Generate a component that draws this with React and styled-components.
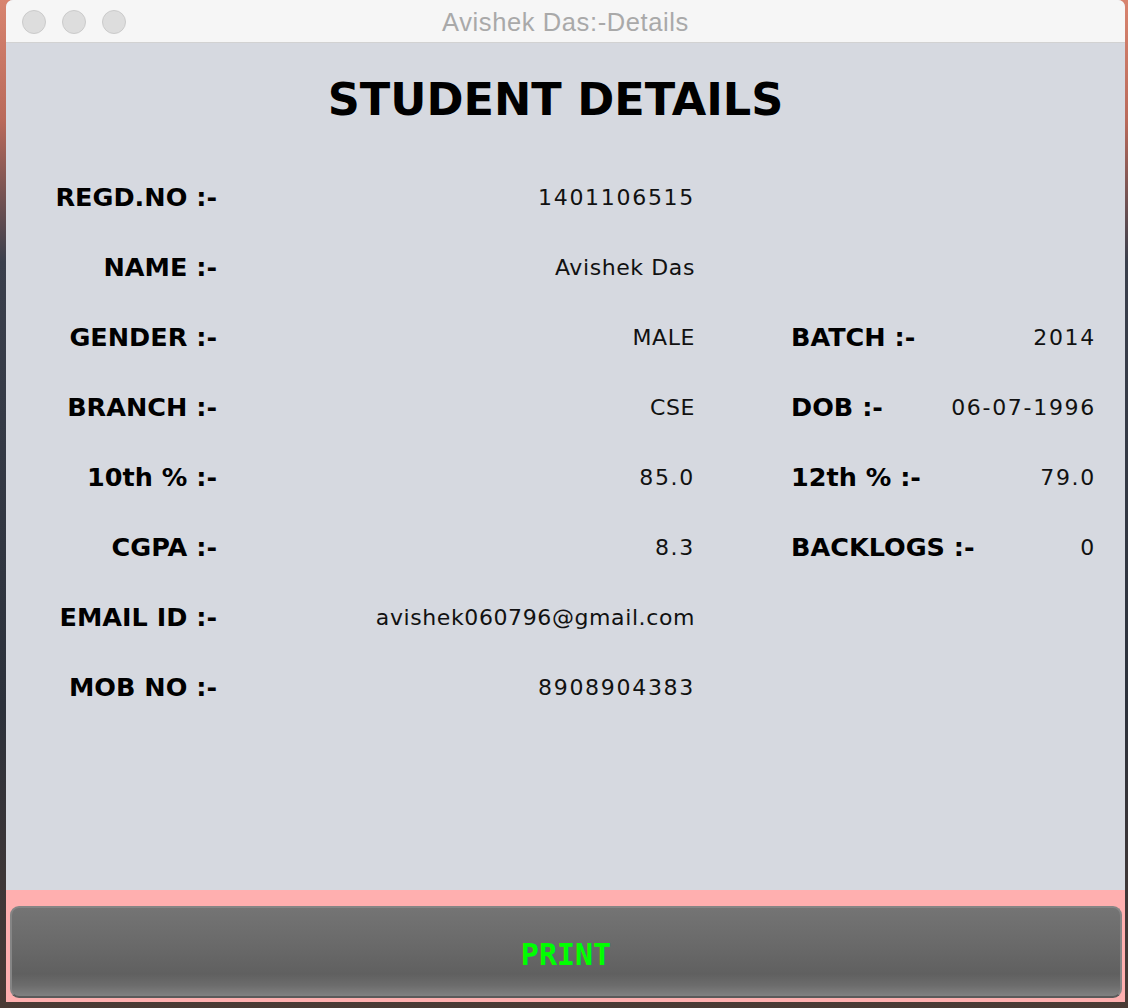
import styled, { createGlobalStyle } from 'styled-components'

const GlobalStyle = createGlobalStyle`
  html, body {
    margin: 0;
    padding: 0;
  }
  body {
    width: 1128px;
    height: 1008px;
    overflow: hidden;
    background: linear-gradient(180deg, #d8846f 0%, #b9695a 12%, #3a3f4c 26%, #2c313b 70%, #4a3a34 100%);
  }
`

const student = {
  regd: '1401106515',
  name: 'Avishek Das',
  gender: 'MALE',
  branch: 'CSE',
  tenth: '85.0',
  cgpa: '8.3',
  email: 'avishek060796@gmail.com',
  mob: '8908904383',
  batch: '2014',
  dob: '06-07-1996',
  twelfth: '79.0',
  backlogs: '0',
}

const isNumeric = (v) => /^[\d.\-]+$/.test(v)

function App() {
  const rows = [
    { label: 'REGD.NO :-', value: student.regd },
    { label: 'NAME :-', value: student.name },
    { label: 'GENDER :-', value: student.gender, side: ['BATCH :-', student.batch] },
    { label: 'BRANCH :-', value: student.branch, side: ['DOB :-', student.dob] },
    { label: '10th % :-', value: student.tenth, side: ['12th % :-', student.twelfth] },
    { label: 'CGPA :-', value: student.cgpa, side: ['BACKLOGS :-', student.backlogs] },
    { label: 'EMAIL ID :-', value: student.email },
    { label: 'MOB NO :-', value: student.mob },
  ]

  return (
    <>
      <GlobalStyle />
      <Window>
        <TitleBar>
          <Lights>
            <Light />
            <Light />
            <Light />
          </Lights>
          <WindowTitle>Avishek Das:-Details</WindowTitle>
        </TitleBar>

        <Content>
          <Heading>STUDENT DETAILS</Heading>
          <Rows>
            {rows.map((row) => (
              <Row key={row.label}>
                <Label>{row.label}</Label>
                <Value $numeric={isNumeric(row.value)}>{row.value}</Value>
                {row.side && (
                  <SidePair>
                    <SideLabel>{row.side[0]}</SideLabel>
                    <SideValue $numeric={isNumeric(row.side[1])}>{row.side[1]}</SideValue>
                  </SidePair>
                )}
              </Row>
            ))}
          </Rows>
        </Content>

        <Footer>
          <PrintButton>PRINT</PrintButton>
        </Footer>
      </Window>
    </>
  )
}

const Window = styled.div`
  margin-left: 6px;
  width: 1119px;
  height: 1002px;
  display: flex;
  flex-direction: column;
  border-radius: 7px 7px 0 0;
  overflow: hidden;
  background: #d6d9e0;
`

const TitleBar = styled.div`
  position: relative;
  height: 42px;
  flex-shrink: 0;
  display: flex;
  align-items: center;
  justify-content: center;
  background: #f6f6f6;
  border-bottom: 1px solid #d2d2d2;
`

const Lights = styled.div`
  position: absolute;
  left: 16px;
  top: 10px;
  display: flex;
  gap: 16px;
`

const Light = styled.span`
  width: 22px;
  height: 22px;
  border-radius: 50%;
  background: #dddddd;
  border: 1px solid #cbcbcb;
`

const WindowTitle = styled.div`
  padding-top: 2px;
  font-family: 'Liberation Sans', Arial, sans-serif;
  font-size: 25.5px;
  letter-spacing: 0.6px;
  color: #a9a9a9;
`

const Content = styled.div`
  flex: 1;
  display: flex;
  flex-direction: column;
  padding-top: 28px;
`

const Heading = styled.h1`
  margin: 0 20px 0 0;
  height: 58px;
  line-height: 58px;
  text-align: center;
  font-family: 'DejaVu Sans', Verdana, sans-serif;
  font-weight: 700;
  font-size: 44.6px;
  color: #000;
`

const Rows = styled.div`
  margin-top: 33px;
  display: flex;
  flex-direction: column;
`

const Row = styled.div`
  height: 70px;
  display: flex;
  align-items: center;
`

const Label = styled.div`
  width: 211px;
  flex-shrink: 0;
  text-align: right;
  font-family: 'DejaVu Sans', Verdana, sans-serif;
  font-weight: 700;
  font-size: 25.5px;
  color: #000;
  white-space: nowrap;
`

const Value = styled.div`
  width: 478px;
  flex-shrink: 0;
  text-align: right;
  font-family: 'DejaVu Sans', Verdana, sans-serif;
  font-size: 22px;
  letter-spacing: ${(p) => (p.$numeric ? '1.7px' : '0.6px')};
  color: #111;
  white-space: nowrap;
`

const SidePair = styled.div`
  margin-left: 96px;
  width: 305px;
  display: flex;
  align-items: center;
  justify-content: space-between;
`

const SideLabel = styled.span`
  font-family: 'DejaVu Sans', Verdana, sans-serif;
  font-weight: 700;
  font-size: 25.5px;
  color: #000;
  white-space: nowrap;
`

const SideValue = styled.span`
  font-family: 'DejaVu Sans', Verdana, sans-serif;
  font-size: 22px;
  letter-spacing: ${(p) => (p.$numeric ? '1.7px' : '0.6px')};
  color: #111;
  white-space: nowrap;
`

const Footer = styled.div`
  height: 112px;
  flex-shrink: 0;
  box-sizing: border-box;
  padding: 16px 3px 4px 4px;
  background: #ffafaf;
  display: flex;
`

const PrintButton = styled.button`
  flex: 1;
  border: 2px solid #858585;
  border-bottom-color: #5a5a5a;
  border-radius: 9px;
  background: linear-gradient(180deg, #747474 0%, #6a6a6a 40%, #606060 75%, #6c6c6c 88%, #818181 100%);
  color: #00ff00;
  font-family: 'DejaVu Sans Mono', 'Liberation Mono', monospace;
  font-weight: 700;
  font-size: 30px;
  padding: 4px 0 0;
  cursor: pointer;
`

export default App
